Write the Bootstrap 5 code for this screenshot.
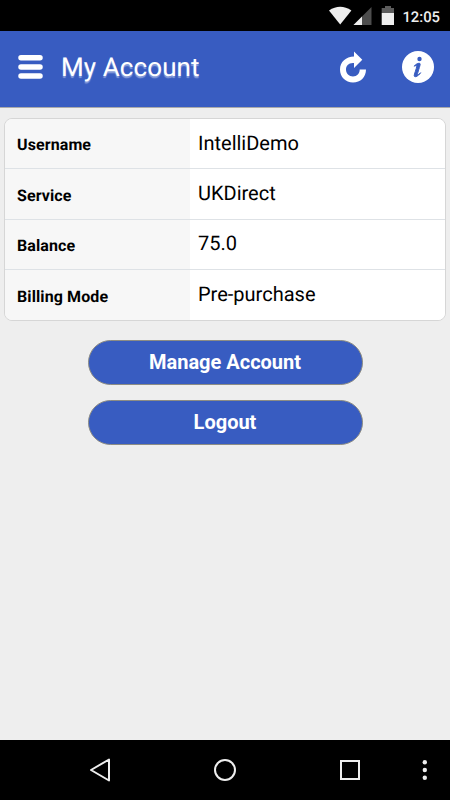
<!DOCTYPE html>
<html lang="en">
<head>
<meta charset="utf-8">
<meta name="viewport" content="width=device-width, initial-scale=1">
<title>My Account</title>
<link href="https://cdn.jsdelivr.net/npm/bootstrap@5.3.0/dist/css/bootstrap.min.css" rel="stylesheet">
<style>
  body { font-family: Roboto, "Liberation Sans", sans-serif; background: #eee; color: #000; text-rendering: geometricPrecision; }
  svg { display: block; flex: none; }
  .status-bar { height: 31px; padding-right: 10px; }
  .clock { font-size: 14.800px; font-weight: 500; line-height: 29px; padding-top: 3px; color: #eee; margin-left: 6px; }
  .app-bar { height: 77px; background: #385cc1; border-bottom: 1px solid #aaa; padding: 0 16px 4px 18px; }
  .app-title { font-size: 26px; line-height: 30px; padding-top: 2px; letter-spacing: .1px; color: #fff; text-shadow: 0 2px 1px rgba(255,255,255,.4); margin-left: 18px; }
  .info-btn { margin-left: 35px; }
  .account-list { margin: 10px 4px 0; border: 1px solid #d6d6d6; border-radius: 8px; --bs-list-group-border-color: #d6d6d6; }
  .account-row { height: 50.4px; border-color: #d6d6d6; color: #000; }
  .account-row:last-child { height: 50px; }
  .row-label { width: 185px; padding: 3.500px 0 0 12px; background: #f7f7f7; font-size: 16px; font-weight: 700; letter-spacing: .1px; }
  .row-value { padding: 0 0 2px 8px; font-size: 20px; }
  .actions { margin-top: 19px; gap: 15px; }
  .action-btn { width: 275px; height: 45px; padding: 0; border: 1px solid #8c8c84; background: #385cc1; color: #fff; font-size: 20px; font-weight: 700; line-height: 43px; }
  .nav-keys { height: 60px; }
</style>
<script src="https://cdn.jsdelivr.net/npm/bootstrap@5.3.0/dist/js/bootstrap.bundle.min.js"></script>
</head>
<body class="d-flex flex-column vh-100 overflow-hidden">
  <div class="status-bar bg-black d-flex justify-content-end align-items-center">
    <svg width="68" height="31" viewBox="0 0 68 31">
      <path d="M1 10.500Q12.200 3 23.400 10.500L12.200 24.500Z" fill="#eee"/>
      <path d="M43.500 7v18h-18z" fill="#4d4d4d"/>
      <path d="M34 16.500v8.500h-8.500z" fill="#eee"/>
      <path d="M57 6h6v2h3v5H53.700V8H57z" fill="#5c5c5c"/>
      <path d="M53.700 13H66v12H53.700z" fill="#eee"/>
    </svg>
    <span class="clock">12:05</span>
  </div>
  <header class="app-bar d-flex align-items-center">
    <button type="button" class="btn p-0 border-0" aria-label="Menu">
      <svg width="25" height="26" viewBox="0 0 25 26"><path d="M3 3.700h19M3 12.900h19M3 22.100h19" stroke="#fff" stroke-width="5.500" stroke-linecap="round"/></svg>
    </button>
    <h1 class="app-title fw-normal mb-0 me-auto">My Account</h1>
    <button type="button" class="btn p-0 border-0" aria-label="Refresh">
      <svg width="28" height="32" viewBox="0 0 28 32"><path d="M15 .500L23.300 8.800 15 17V12C9.500 11.500 7 15 7 18.400c0 4 3 7 7 7s6.700-3 6.700-7h6.300C27 26 21.500 31.500 14 31.500S1 26 1 18.500 7 5.500 15 5.500z" fill="#fff"/></svg>
    </button>
    <button type="button" class="btn p-0 border-0 info-btn" aria-label="Info">
      <svg width="32" height="32" viewBox="0 0 32 32">
        <circle cx="16" cy="16" r="16" fill="#fff"/>
        <circle cx="17.500" cy="8" r="2.200" fill="#385cc1"/>
        <path d="M12.200 15.200c1.800-2.500 5.800-4 6-2.100.1 1-2.800 9.200-2.700 10.400.1.800 1.700-.200 3.100-1.800-1.800 3.200-6.100 5.300-6.400 3.100-.2-1.300 2.500-7.500 2.500-9.500 0-1.100-1.300-.700-2.500-.100z" fill="#385cc1" stroke="#385cc1" stroke-width="1"/>
      </svg>
    </button>
  </header>
  <main class="flex-grow-1">
    <div class="account-list list-group overflow-hidden">
      <div class="account-row list-group-item border-0 border-bottom p-0 d-flex align-items-stretch"><div class="row-label d-flex align-items-center">Username</div><div class="row-value bg-white flex-grow-1 d-flex align-items-center">IntelliDemo</div></div>
      <div class="account-row list-group-item border-0 border-bottom p-0 d-flex align-items-stretch"><div class="row-label d-flex align-items-center">Service</div><div class="row-value bg-white flex-grow-1 d-flex align-items-center">UKDirect</div></div>
      <div class="account-row list-group-item border-0 border-bottom p-0 d-flex align-items-stretch"><div class="row-label d-flex align-items-center">Balance</div><div class="row-value bg-white flex-grow-1 d-flex align-items-center">75.0</div></div>
      <div class="account-row list-group-item border-0 p-0 d-flex align-items-stretch"><div class="row-label d-flex align-items-center">Billing Mode</div><div class="row-value bg-white flex-grow-1 d-flex align-items-center">Pre-purchase</div></div>
    </div>
    <div class="actions d-flex flex-column align-items-center">
      <button type="button" class="action-btn btn rounded-pill">Manage Account</button>
      <button type="button" class="action-btn btn rounded-pill">Logout</button>
    </div>
  </main>
  <nav class="nav-keys bg-black" aria-label="System navigation">
    <svg width="450" height="60" viewBox="0 0 450 60" fill="none" stroke="#eee" stroke-width="2">
      <path d="M109 19.500v21L91 30z" stroke-linejoin="round"/>
      <circle cx="225" cy="30" r="10"/>
      <path d="M341 21h18v18h-18z"/>
      <g fill="#eee" stroke="none"><circle cx="424.800" cy="22.300" r="2.200"/><circle cx="424.800" cy="30" r="2.200"/><circle cx="424.800" cy="37.700" r="2.200"/></g>
    </svg>
  </nav>
</body>
</html>
